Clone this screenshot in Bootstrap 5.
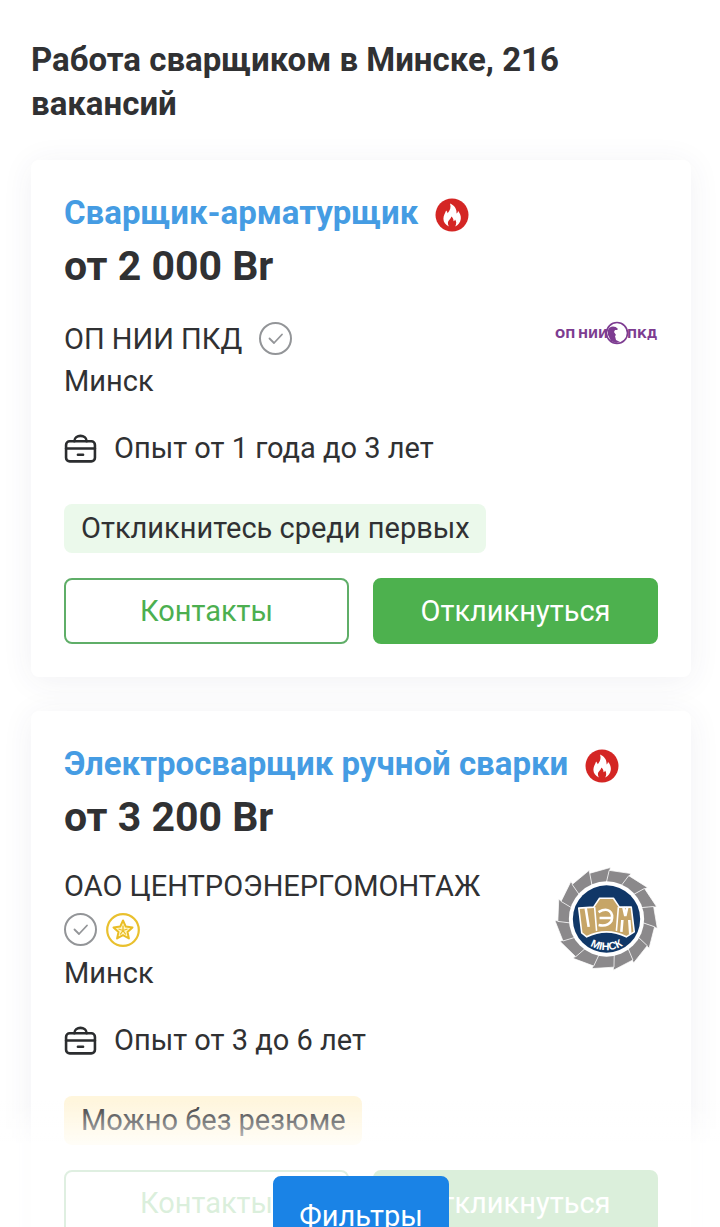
<!DOCTYPE html>
<html lang="ru">
<head>
<meta charset="utf-8">
<meta name="viewport" content="width=device-width, initial-scale=1">
<title>Работа сварщиком в Минске</title>
<link href="https://cdn.jsdelivr.net/npm/bootstrap@5.3.0/dist/css/bootstrap.min.css" rel="stylesheet">
<style>
  body { font-family: Roboto, "Noto Sans", sans-serif; font-size: 29px; line-height: 42px; color: #303133; background: #fff; }
  .page { padding: 38px 29px 33px 31px; }
  h1 { font-size: 33px; line-height: 44px; font-weight: 700; margin-bottom: 34px; }
  .vacancy { border: 0; border-radius: 8px; padding: 31px 33px 33px; margin-bottom: 34px; box-shadow: 0 4px 32px rgba(60, 60, 100, .07); --bs-card-color: #303133; }
  .vacancy h2 { font-size: 33px; line-height: 44px; font-weight: 700; margin: 0; gap: 17px; }
  .vacancy h2 a { color: #459ce3; text-decoration: none; }
  .vacancy h2 svg { margin-top: 4px; }
  .salary { font-size: 41px; line-height: 52px; font-weight: 700; margin: 5px 0 22px; }
  .marks { gap: 17px; padding-top: 4px; }
  .marks-below { height: 45px; gap: 8px; }
  .logo-box { width: 103px; }
  .experience { gap: 17px; margin: 25px 0 35px; }
  .tag { border-radius: 8px; line-height: 49px; padding: 0 16px 0 17px; margin-bottom: 25px; }
  .tag-green { background: #ebf9eb; }
  .tag-yellow { background: #fff6dd; }
  .actions { gap: 24px; }
  .actions .btn { flex: 1 1 0; }
  .btn-tall { --bs-btn-font-size: 29px; --bs-btn-line-height: 62px; --bs-btn-padding-y: 0; --bs-btn-border-width: 2px; --bs-btn-border-radius: 8px; }
  .btn-line { --bs-btn-color: #4caf50; --bs-btn-border-color: #5fae68; --bs-btn-bg: #fff; }
  .btn-fill { --bs-btn-color: #fff; --bs-btn-border-color: #4db14e; --bs-btn-bg: #4db14e; }
  .btn-filter { --bs-btn-color: #fff; --bs-btn-border-color: #1a83e6; --bs-btn-bg: #1a83e6; --bs-btn-line-height: 76px; --bs-btn-padding-x: 24px; }
  .fade-bar { height: 127px; padding: 76px 0 0 2px; overflow: hidden; background: linear-gradient(rgba(255,255,255,0), rgba(255,255,255,.8) 46px); }
</style>
</head>
<body>
<svg class="d-none" aria-hidden="true">
  <symbol id="fire" viewBox="0 0 34 34">
    <circle cx="17" cy="17" r="16.500" fill="#d42624"/>
    <path fill="#fff" d="M15 5.500c4.500 2 7 5.500 6.500 10 1-.6 1.400-1.500 1.500-2.800 2 2.500 3.200 5.200 2.800 8.300-.5 3.500-2.600 6-5.600 7.400 1.500-2.600 1.300-5-.2-6.800-.2 1-.8 1.500-1.500 1.700.2-2-.8-3.700-2.300-4.700.2 2.300-3.200 3.600-3.300 6.500 0 1.200.3 2.300 1 3.300-3.400-1.500-5.500-4.200-5.500-7.600 0-3.200 1.700-5.400 2.700-8.300.9.8 1.400 1.700 1.500 2.800 2.500-2.800 3.700-6 2.400-9.800z"/>
  </symbol>
  <symbol id="check" viewBox="0 0 34 34">
    <g fill="none" stroke="#939598" stroke-width="2"><circle cx="16.500" cy="16.500" r="15.500"/><path stroke-linecap="round" stroke-linejoin="round" stroke-width="1.800" d="M10.500 16.500l4.500 4.500 8-8.500"/></g>
  </symbol>
  <symbol id="star" viewBox="0 0 34 34">
    <circle cx="17" cy="17" r="15.800" fill="#fff" stroke="#e9c02e" stroke-width="2.200"/>
    <path fill="#fff6c8" stroke="#e9bd25" stroke-width="2" stroke-linejoin="round" d="M17 7.500l2.800 6.100 6.700.8-5 4.500 1.400 6.600-5.900-3.300-5.900 3.300 1.400-6.600-5-4.500 6.700-.8z"/>
    <path fill="none" stroke="#e9bd25" stroke-width="1.300" d="M17 12.500v5M17 17.500l4.500-1.500M17 17.500l-4.500-1.500M17 17.500l-2.800 4M17 17.500l2.800 4"/>
  </symbol>
  <symbol id="case" viewBox="0 0 32 30">
    <g fill="none" stroke="#2b2d2f" stroke-width="2.500" stroke-linecap="round" stroke-linejoin="round"><rect x="2" y="8" width="28" height="19.500" rx="3.500"/><path d="M10 8c0-7 12-7 12 0M2 15h28M13.500 21h5"/></g>
  </symbol>
</svg>

<main class="page">
  <h1>Работа сварщиком в Минске, 216 вакансий</h1>

  <article class="card vacancy">
    <h2 class="d-flex align-items-center"><a href="#">Сварщик-арматурщик</a><svg width="34" height="34"><use href="#fire"/></svg></h2>
    <p class="salary">от 2 000 Br</p>
    <div class="d-flex justify-content-between">
      <div>
        <div class="d-flex align-items-center marks"><span>ОП НИИ ПКД</span><svg width="34" height="34"><use href="#check"/></svg></div>
        <div>Минск</div>
      </div>
      <div class="logo-box">
        <svg class="d-block" width="103" height="38" viewBox="0 0 103 38" font-family="DejaVu Sans, sans-serif" font-weight="700" font-size="12" fill="#7d3c91">
          <text x="0" y="24">ОП</text><text x="23" y="24">НИИ</text><text x="72" y="24">ПКД</text>
          <circle cx="62" cy="19" r="10.500" fill="#fff" stroke="#7d3c91" stroke-width="1.600"/>
          <path d="M53 16c1-4 7-5 10-1l-1 1-2 0-1 2 2 3-1 1 1 4 4 2-4 1-5-2-3-6z"/>
        </svg>
      </div>
    </div>
    <div class="d-flex align-items-center experience"><svg width="33" height="31"><use href="#case"/></svg><span>Опыт от 1 года до 3 лет</span></div>
    <div class="tag tag-green align-self-start">Откликнитесь среди первых</div>
    <div class="d-flex actions">
      <button type="button" class="btn btn-tall btn-line">Контакты</button>
      <button type="button" class="btn btn-tall btn-fill">Откликнуться</button>
    </div>
  </article>

  <article class="card vacancy">
    <h2 class="d-flex align-items-center"><a href="#">Электросварщик ручной сварки</a><svg width="34" height="34"><use href="#fire"/></svg></h2>
    <p class="salary">от 3 200 Br</p>
    <div class="d-flex justify-content-between">
      <div>
        <div>ОАО ЦЕНТРОЭНЕРГОМОНТАЖ</div>
        <div class="d-flex align-items-center marks-below"><svg width="34" height="34"><use href="#check"/></svg><svg width="34" height="34"><use href="#star"/></svg></div>
        <div>Минск</div>
      </div>
      <div class="logo-box">
        <svg class="d-block" width="103" height="108" viewBox="-52 -54 104 108">
          <defs><path id="tooth" fill="#8b898b" stroke="#fff" stroke-width=".7" d="M-17.500 -46L4 -52L0 -35L-15 -33z"/><path id="arc" d="M-28 15A32 32 0 0 0 28 15"/></defs>
          <g>
            <use href="#tooth"/><use href="#tooth" transform="rotate(24)"/><use href="#tooth" transform="rotate(48)"/><use href="#tooth" transform="rotate(72)"/><use href="#tooth" transform="rotate(96)"/><use href="#tooth" transform="rotate(120)"/><use href="#tooth" transform="rotate(144)"/><use href="#tooth" transform="rotate(168)"/><use href="#tooth" transform="rotate(192)"/><use href="#tooth" transform="rotate(216)"/><use href="#tooth" transform="rotate(240)"/><use href="#tooth" transform="rotate(264)"/><use href="#tooth" transform="rotate(288)"/><use href="#tooth" transform="rotate(312)"/><use href="#tooth" transform="rotate(336)"/>
          </g>
          <circle r="38" fill="#fff"/><circle r="34" fill="#103767"/>
          <path fill="#c6a567" stroke="#fff" stroke-width="1.600" stroke-linejoin="round" d="M-28 -11L-13 -12-7 -21H7L13 -12 25 -12 28 13 20 18Q0 8-20 18L-25 14z"/>
          <path fill="none" stroke="#fff" stroke-width="1.600" d="M-12 -12L-10 12M12 -12L10 12"/>
          <path fill="none" stroke="#fff" stroke-width="2.600" d="M-21 -11L-18 8M-8 -7Q-1 -11 3 -8T5 2Q1 8-8 6M-7 -1H5M17 -12L19 -3 21 -12M16 1L15 13M23 1L24 15"/>
          <text font-family="Liberation Sans, sans-serif" font-size="11" font-weight="700" fill="#fff" text-anchor="middle"><textPath href="#arc" startOffset="50%">МІНСК</textPath></text>
        </svg>
      </div>
    </div>
    <div class="d-flex align-items-center experience"><svg width="33" height="31"><use href="#case"/></svg><span>Опыт от 3 до 6 лет</span></div>
    <div class="tag tag-yellow align-self-start">Можно без резюме</div>
    <div class="d-flex actions">
      <button type="button" class="btn btn-tall btn-line">Контакты</button>
      <button type="button" class="btn btn-tall btn-fill">Откликнуться</button>
    </div>
  </article>
</main>

<div class="fixed-bottom fade-bar d-flex justify-content-center align-items-start">
  <button type="button" class="btn btn-tall btn-filter">Фильтры</button>
</div>
<script src="https://cdn.jsdelivr.net/npm/bootstrap@5.3.0/dist/js/bootstrap.bundle.min.js"></script>
</body>
</html>
